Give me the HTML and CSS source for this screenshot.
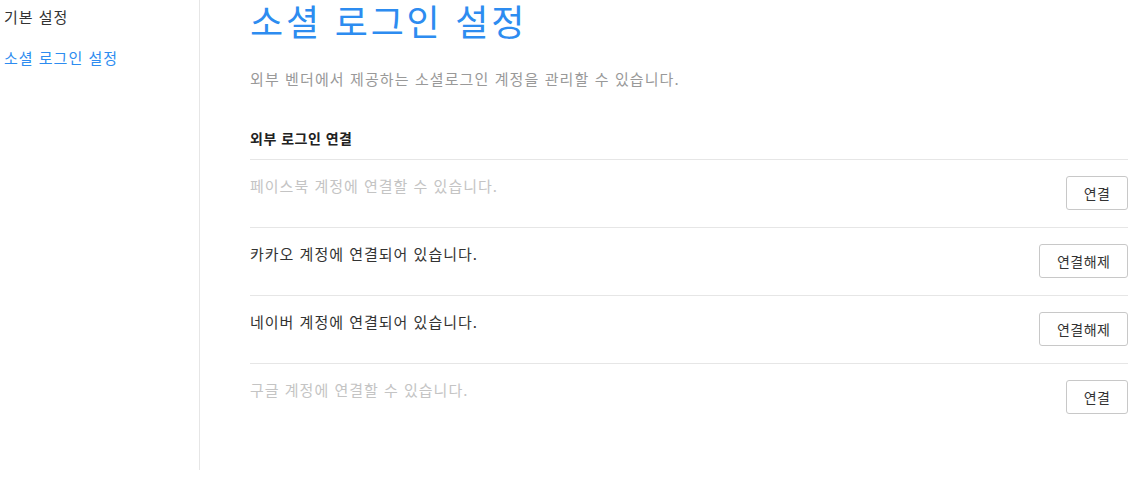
FILE: index.html
```html
<!DOCTYPE html>
<html lang="ko">
<head>
    <meta charset="UTF-8" />
    <title>소셜 로그인 설정</title>
    <link rel="stylesheet" href="styles.css">
</head>
<body>
    <div class="wrap">
        <ul class="side">
            <li>기본 설정</li>
            <li class="on">소셜 로그인 설정</li>
        </ul>
        <div class="main">
            <h1>소셜 로그인 설정</h1>
            <p class="desc">외부 벤더에서 제공하는 소셜로그인 계정을 관리할 수 있습니다.</p>
            <h4>외부 로그인 연결</h4>
            <ul class="list">
                <li class="off">
                    <span>페이스북 계정에 연결할 수 있습니다.</span>
                    <button>연결</button>
                </li>
                <li>
                    <span>카카오 계정에 연결되어 있습니다.</span>
                    <button>연결해제</button>
                </li>
                <li>
                    <span>네이버 계정에 연결되어 있습니다.</span>
                    <button>연결해제</button>
                </li>
                <li class="off">
                    <span>구글 계정에 연결할 수 있습니다.</span>
                    <button>연결</button>
                </li>
            </ul>
        </div>
    </div>
</body>
</html>
```
FILE: styles.css
```css
*{
    margin: 0;
    padding: 0;
    font-family: "Noto Sans CJK KR", "Noto Sans", sans-serif;
}
body{
    background: #fff;
    color: #333;
}
ul{
    list-style: none;
}
.wrap{
    display: flex;
    height: 470px;
}
.side{
    width: 195px;
    padding-left: 4px;
    border-right: 1px solid #e6e6e6;
}
.side li{
    font-size: 15px;
    letter-spacing: 1px;
    line-height: 20px;
    height: 20px;
    margin-top: 7px;
    margin-bottom: 21px;
    color: #333;
}
.side li.on{
    color: #2d8cf0;
}
.main{
    flex: 1;
    padding: 0 5px 0 50px;
}
h1{
    font-size: 36px;
    font-weight: normal;
    letter-spacing: 2.8px;
    line-height: 40px;
    color: #2d8cf0;
}
.desc{
    font-size: 15px;
    letter-spacing: 1.1px;
    line-height: 20px;
    color: #999;
    margin-top: 29px;
}
h4{
    font-size: 14px;
    font-weight: bold;
    letter-spacing: 0.5px;
    line-height: 20px;
    color: #222;
    margin-top: 39px;
    padding-bottom: 11px;
    border-bottom: 1px solid #e6e6e6;
}
.list li{
    display: flex;
    justify-content: space-between;
    align-items: flex-start;
    padding: 16px 0 17px;
    border-bottom: 1px solid #e6e6e6;
}
.list li span{
    font-size: 15px;
    letter-spacing: 1px;
    line-height: 20px;
    color: #333;
}
.list li.off span{
    color: #c4c4c4;
}
.list li:last-child{
    border-bottom: none;
}
button{
    height: 34px;
    padding: 0 16.5px;
    font-size: 14px;
    letter-spacing: 0.5px;
    color: #333;
    background: #fff;
    border: 1px solid #c8c8c8;
    border-radius: 3px;
    outline: none;
}
```
